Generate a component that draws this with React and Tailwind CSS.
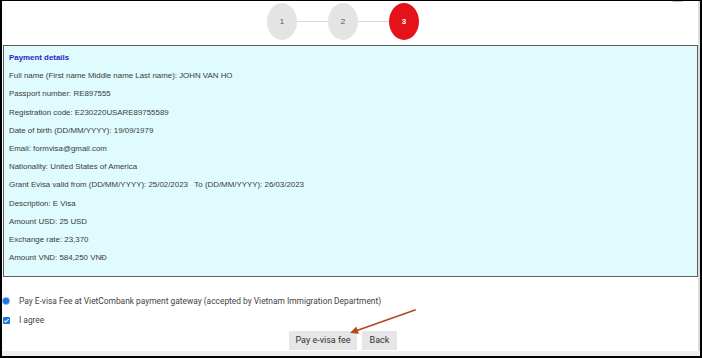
import React from "react";

const lines = [
  "Full name (First name Middle name Last name): JOHN VAN HO",
  "Passport number: RE897555",
  "Registration code: E230220USARE89755589",
  "Date of birth (DD/MM/YYYY): 19/09/1979",
  "Email: formvisa@gmail.com",
  "Nationality: United States of America",
  "Grant Evisa valid from (DD/MM/YYYY): 25/02/2023   To (DD/MM/YYYY): 26/03/2023",
  "Description: E Visa",
  "Amount USD: 25 USD",
  "Exchange rate: 23,370",
  "Amount VND: 584,250 VNĐ",
];

function Step({ n, active }) {
  return (
    <div
      className={`w-[30px] h-[37px] rounded-[50%] flex items-center justify-center text-[8px] ${
        active ? "bg-[#e5121c] text-white font-bold" : "bg-[#e4e4e4] text-[#555]"
      }`}
    >
      {n}
    </div>
  );
}

export default function App() {
  return (
    <div
      className="relative w-[702px] h-[358px] bg-white border-t border-l-2 border-r-2 border-b-2 border-black overflow-hidden flex flex-col"
      style={{ fontFamily: '"Liberation Sans", Arial, sans-serif' }}
    >
      <div className="flex flex-1 min-h-0">
        <div className="flex-1 flex flex-col">
          {/* steps */}
          <div className="h-[44px] pt-[2px] pl-[265px] flex items-start">
            <Step n="1" />
            <div className="w-[31px] h-px bg-[#d9d9d9] mt-[18px]" />
            <Step n="2" />
            <div className="w-[31px] h-px bg-[#d9d9d9] mt-[18px]" />
            <Step n="3" active />
          </div>
          {/* panel */}
          <div className="ml-[1px] h-[232px] border border-[#5f5f5f] bg-[#e0fbfd] pt-[3px] pl-[5px] text-[7.9px] text-[#3a3a3a]">
            <div className="leading-[18.2px] font-bold text-[#2525c5]">Payment details</div>
            {lines.map((l) => (
              <div key={l} className="leading-[18.2px] whitespace-pre">
                {l}
              </div>
            ))}
          </div>
          {/* options */}
          <div
            className="flex flex-col text-[8.4px] text-[#444]"
            style={{ fontFamily: "Roboto, Arial, sans-serif" }}
          >
            <div className="mt-[18px] h-[12px] flex items-center pl-[1px]">
              <span className="w-[6px] h-[6px] rounded-full bg-[#1a73e8] ring-1 ring-[#8fb8f0]" />
              <span className="ml-[10px]">
                Pay E-visa Fee at VietCombank payment gateway (accepted by Vietnam Immigration Department)
              </span>
            </div>
            <div className="mt-[7px] h-[12px] flex items-center pl-[1px]">
              <svg width="7" height="7" viewBox="0 0 7 7">
                <rect x="0" y="0" width="7" height="7" rx="1" fill="#1a73e8" />
                <path d="M1.4 3.6 L2.9 5 L5.6 2" stroke="white" strokeWidth="1.1" fill="none" />
              </svg>
              <span className="ml-[9px]">I agree</span>
            </div>
            <div className="mt-[5px] flex pl-[287px] gap-[5px] text-[9px]">
              <div className="h-[19px] w-[68px] bg-[#e6e6e6] flex items-center justify-center text-[#333]">
                Pay e-visa fee
              </div>
              <div className="h-[19px] w-[35px] bg-[#e6e6e6] flex items-center justify-center text-[#333]">
                Back
              </div>
            </div>
          </div>
        </div>
        <div className="w-[2px] bg-[#dcdcdc]" />
      </div>
      <div className="h-[5px] bg-[#efefef] shrink-0" />
      <div className="absolute right-[17px] top-[-1px] w-[11px] h-[2px] bg-[#bdbdbd] rounded-b" />
      <svg
        className="absolute left-[-2px] top-[-1px] pointer-events-none"
        width="702"
        height="358"
        viewBox="0 0 702 358"
      >
        <line x1="415" y1="310" x2="357" y2="330.5" stroke="#b4481f" strokeWidth="1.8" strokeLinecap="round" />
        <polygon points="350,333 358.9,333.8 356.3,326.6" fill="#b4481f" />
      </svg>
    </div>
  );
}
